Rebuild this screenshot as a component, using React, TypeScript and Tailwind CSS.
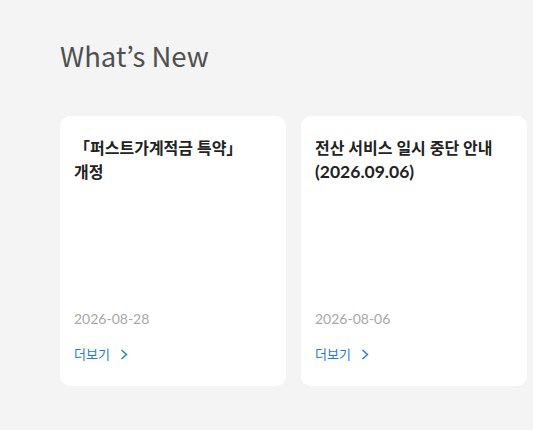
const news = [
  { title: "「퍼스트가계적금 특약」 개정", note: "", date: "2026-08-28" },
  { title: "전산 서비스 일시 중단 안내", note: "(2026.09.06)", date: "2026-08-06" },
];

const Chevron = () => (
  <svg viewBox="0 0 8 11" className="h-[11px] w-[8px]" fill="none" stroke="currentColor" strokeWidth={1.4}>
    <polyline points="1.5,1 6.5,5.5 1.5,10" />
  </svg>
);

const App = () => {
  return (
    <div
      className="min-h-[430px] bg-[#f4f4f4] pl-[60px] pt-[35px] overflow-hidden"
      style={{ fontFamily: '"Lato", "Noto Sans CJK KR", sans-serif' }}
    >
      <h2
        className="text-[27.5px] leading-[40px] text-[#505050] font-normal"
        style={{ fontFamily: '"Noto Sans CJK KR", "Noto Sans", sans-serif' }}
      >
        What’s New
      </h2>

      <div className="mt-[41px] flex gap-[15px]">
        {news.map((item) => (
          <div
            key={item.date}
            className="w-[226px] h-[270px] shrink-0 rounded-[10px] bg-white px-[14px] pt-[20px] pb-[22px] flex flex-col"
          >
            <p className="text-[16px] leading-[24px] font-bold text-[#222] break-keep">
              {item.title}
              {item.note && <span className="text-[17.5px]"> {item.note}</span>}
            </p>
            <p className="mt-auto text-[14px] leading-[20px] text-[#a8a8a8]">{item.date}</p>
            <a href="#" className="mt-[15px] flex items-center gap-[10px] text-[13px] leading-[20px] text-[#1b7be6]">
              더보기
              <Chevron />
            </a>
          </div>
        ))}
      </div>
    </div>
  );
};

export default App;
